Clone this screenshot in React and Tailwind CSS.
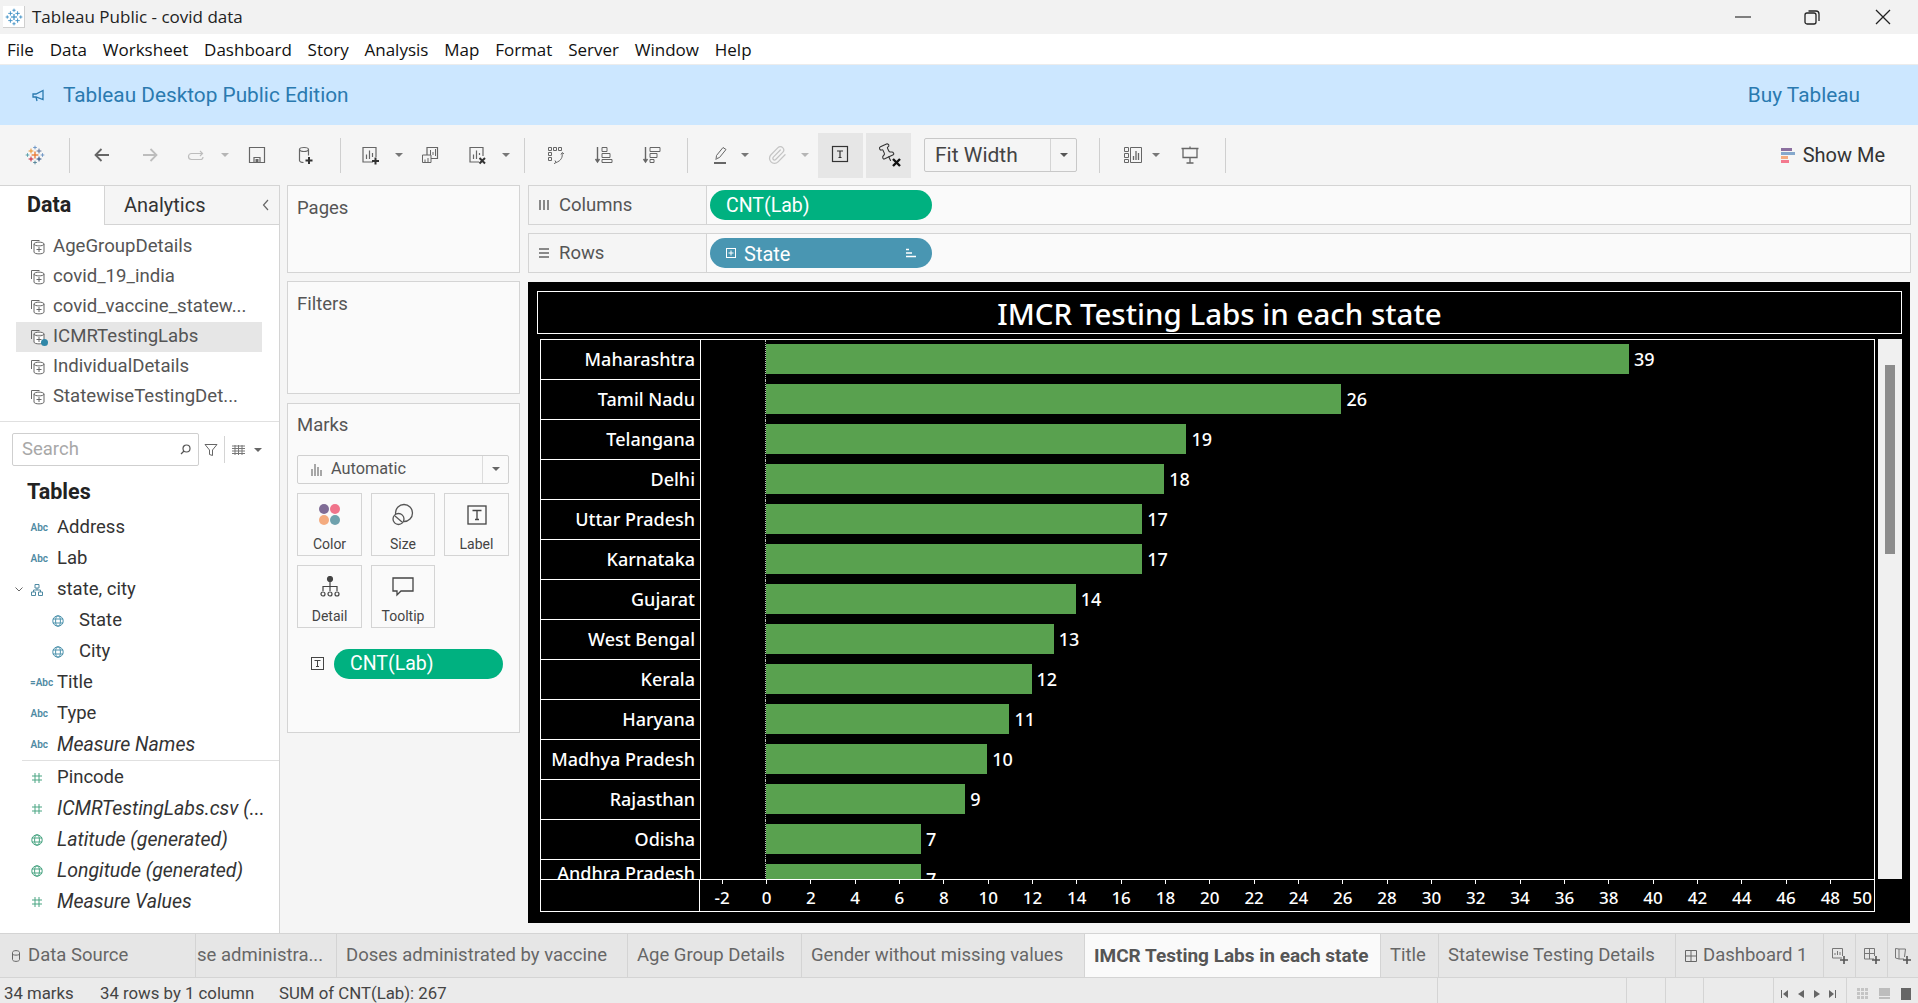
import React from "react";
import { Paperclip, Pin } from "lucide-react";

const ROBOTO = "font-['Roboto','Liberation_Sans',sans-serif]";
const SEGOE = "font-['Open_Sans','Noto_Sans',sans-serif]";

function Plus({ x, y, s = 3, c, w = 1.2 }) {
  return (
    <g stroke={c} strokeWidth={w}>
      <line x1={x - s} y1={y} x2={x + s} y2={y} />
      <line x1={x} y1={y - s} x2={x} y2={y + s} />
    </g>
  );
}

function TableauLogo({ mono, size = 20 }) {
  const c = mono
    ? ["#3d8fc4", "#3d8fc4", "#3d8fc4", "#3d8fc4", "#3d8fc4", "#3d8fc4", "#3d8fc4"]
    : ["#e8762d", "#5b6f94", "#c72037", "#1f447a", "#5fa2ad", "#7399c6", "#59879b"];
  return (
    <svg width={size} height={size} viewBox="0 0 20 20" fill="none">
      <Plus x={10} y={10} s={3.4} c={c[0]} w={1.3} />
      <Plus x={6} y={6} s={2.4} c={mono ? c[1] : "#eb912b"} w={1} />
      <Plus x={14} y={6} s={2.4} c={c[1]} w={1} />
      <Plus x={6} y={14} s={2.4} c={c[2]} w={1} />
      <Plus x={14} y={14} s={2.4} c={c[3]} w={1} />
      <Plus x={10} y={2.5} s={1.8} c={c[5]} w={1} />
      <Plus x={10} y={17.5} s={1.8} c={c[6]} w={1} />
      <Plus x={2.5} y={10} s={1.8} c={c[4]} w={1} />
      <Plus x={17.5} y={10} s={1.8} c={c[5]} w={1} />
    </svg>
  );
}

const Ico = ({ children, className = "", vb = "0 0 20 20" }) => (
  <svg className={"w-5 h-5 shrink-0 " + className} viewBox={vb} fill="none" stroke="#666" strokeWidth="1.2">
    {children}
  </svg>
);

const Caret = ({ ml, color = "#777" }) => (
  <svg className={"w-2 h-1 shrink-0 " + ml} viewBox="0 0 8 4"><path d="M0 0h8L4 4z" fill={color} /></svg>
);

const VDiv = ({ ml }) => <div className={"w-px h-[35px] bg-[#cfcfcf] shrink-0 " + ml} />;

function Toolbar() {
  return (
    <div className="h-[60px] bg-[#f5f5f5] flex items-center shrink-0">
      <div className="ml-[25px] shrink-0"><TableauLogo /></div>
      <VDiv ml="ml-[24px]" />
      <Ico className="ml-[22px]"><path d="M17 10H3.500M9.500 4l-6 6 6 6" strokeWidth="1.800" /></Ico>
      <Ico className="ml-[28px]"><path d="M3 10h13.500M10.500 4l6 6-6 6" stroke="#bdbdbd" strokeWidth="1.800" /></Ico>
      <Ico className="ml-[26px]"><path d="M16 8.500H5.500a2.500 2.500 0 0 0 0 6h9a2.500 2.500 0 0 0 2.500-2.500M14 6l2.500 2.500L14 11" stroke="#bdbdbd" /></Ico>
      <Caret ml="ml-[15px]" color="#b5b5b5" />
      <Ico className="ml-[18px]"><path d="M2.500 2.500h15v15h-15zM7 17.500v-5h6v5" /><rect x="8.500" y="14" width="3" height="3.500" fill="#666" stroke="none" /></Ico>
      <Ico className="ml-[28px]">
        <ellipse cx="9" cy="4.500" rx="4.500" ry="2" />
        <path d="M4.500 4.500v11c0 1 2 2 4 2M13.500 4.500v6" />
        <path d="M14 12v7M10.500 15.500h7" stroke="#333" strokeWidth="2" />
      </Ico>
      <VDiv ml="ml-[25px]" />
      <Ico className="ml-[19px]">
        <path d="M13 17H3V2.500h13V12" />
        <path d="M6.500 14V9.500M9.500 14V5.500M12.500 12V8" />
        <path d="M15.500 12.500v7M12 16h7" stroke="#333" strokeWidth="2" />
      </Ico>
      <Caret ml="ml-[15px]" />
      <Ico className="ml-[17px]">
        <path d="M7 10V2.500h10.500v11H11" />
        <path d="M2.500 10H11v7.500H2.500zM10.500 10V5M13 10V7M15.500 11V4M5 14.500v3M8 13v4" strokeWidth="1" />
      </Ico>
      <Ico className="ml-[27px]">
        <path d="M12 17H3V2.500h13V11" />
        <path d="M6.500 14V9.500M9.500 14V5.500M12.500 10V8" />
        <path d="M12.500 13l5.500 5.500M18 13l-5.500 5.500" stroke="#333" strokeWidth="2" />
      </Ico>
      <Caret ml="ml-[15px]" />
      <VDiv ml="ml-[14px]" />
      <Ico className="ml-[21px]">
        <path d="M2.500 2.500h3v3h-3zM7.500 2.500h3v3h-3zM12.500 2.500h3v3h-3zM2.500 7.500h3v3h-3zM2.500 12.500h3v3h-3z" strokeWidth="1" />
        <path d="M16 8c1 4-1 8-6 9.500M9 15.500l1 2-2 1.200M15 9.500l1.300-2 1.700 1.500" strokeWidth="1" />
      </Ico>
      <Ico className="ml-[28px]">
        <path d="M3.500 2v14M1.500 14l2 3 2-3" strokeWidth="1.400" />
        <path d="M8 2.500h5v4H8zM8 8.500h8v4H8zM8 14.500h10v3H8z" strokeWidth="1" />
      </Ico>
      <Ico className="ml-[28px]">
        <path d="M3.500 2v14M1.500 14l2 3 2-3" strokeWidth="1.400" />
        <path d="M8 2.500h10v4H8zM8 8.500h7v4H8zM8 14.500h4v3H8z" strokeWidth="1" />
      </Ico>
      <VDiv ml="ml-[25px]" />
      <Ico className="ml-[22px]">
        <path d="M7 13.500L6 14.500l.5-4L13 2.500l3 2-6.500 8z" strokeWidth="1" />
        <path d="M4 18h12" strokeWidth="2" />
      </Ico>
      <Caret ml="ml-[11px]" />
      <Paperclip className="ml-[18px] w-5 h-5 shrink-0" color="#c4c4c4" strokeWidth={1.5} />
      <Caret ml="ml-[14px]" color="#b5b5b5" />
      <div className="ml-[9px] w-[45px] h-[45px] bg-[#e6e6e6] flex items-center justify-center shrink-0">
        <svg className="w-5 h-5 shrink-0 -translate-x-px -translate-y-px" viewBox="0 0 20 20" fill="none"><rect x="2.500" y="2.500" width="15" height="15" stroke="#333" strokeWidth="1.200" /><path d="M7 7h6M10 7v6.500M8.500 13.500h3" stroke="#333" strokeWidth="1.200" /></svg>
      </div>
      <div className="ml-[3px] w-[45px] h-[45px] bg-[#e6e6e6] flex items-center justify-center shrink-0">
        <div className="relative w-[24px] h-[24px]">
          <Pin className="w-[20px] h-[20px] -rotate-[25deg]" color="#333" strokeWidth={1.3} />
          <svg className="absolute right-0 bottom-0 w-[9px] h-[9px]" viewBox="0 0 9 9" stroke="#111" strokeWidth="2.400"><path d="M1 1l7 7M8 1L1 8" /></svg>
        </div>
      </div>
      <div className="ml-[13px] w-[153px] h-[34px] border border-[#c8c8c8] rounded-[2px] flex items-center shrink-0">
        <span className={"flex-1 pl-[10px] pt-[1px] text-[21px] text-[#444] " + ROBOTO}>Fit Width</span>
        <div className="w-[26px] h-full border-l border-[#d4d4d4] flex items-center justify-center"><Caret ml="" color="#555" /></div>
      </div>
      <VDiv ml="ml-[22px]" />
      <Ico className="ml-[23px]">
        <path d="M1.500 2.500h4v4h-4zM1.500 8.500h4v4h-4zM1.500 14.500h4v3h-4zM7.500 2.500h11v15h-11z" strokeWidth="1" />
        <path d="M10.500 15v-4M13 15V6M15.500 15V8" strokeWidth="1.300" />
      </Ico>
      <Caret ml="ml-[9px]" />
      <Ico className="ml-[20px]">
        <path d="M1.500 3.500h17M3 3.500h14v9H3zM10 12.500v5M6.500 18h7M10 1.500v2" strokeWidth="1.300" />
      </Ico>
      <VDiv ml="ml-[25px]" />
      <div className="ml-auto pr-[33px] flex items-center gap-[8px]">
        <div className="flex flex-col gap-[1px] w-[14px]">
          <div className="h-[3px] w-[11px] bg-[#8b6f9f]" />
          <div className="h-[3px] w-[14px] bg-[#85a8cc]" />
          <div className="h-[3px] w-[7px] bg-[#f4ab7f]" />
          <div className="h-[3px] w-[8px] bg-[#f3788d]" />
        </div>
        <span className={"text-[20px] text-[#333] " + ROBOTO}>Show Me</span>
      </div>
    </div>
  );
}

function DsIcon({ active }) {
  return (
    <span className="relative w-[16px] h-[16px] shrink-0">
      <svg className="w-[16px] h-[16px]" viewBox="0 0 16 16" fill="none" stroke="#666" strokeWidth="1">
        <path d="M1.500 10V1.500h8" />
        <path d="M4 13V5c0-2.500 10-2.500 10 0v8c0 2.500-10 2.500-10 0zM4 5c0 2.500 10 2.500 10 0" fill="#fff" />
        <path d="M9 8v5M6.500 10.500h5" />
      </svg>
      {active && <span className="absolute right-[-2px] bottom-[-1px] w-[7px] h-[7px] rounded-full bg-[#2f87a8]" />}
    </span>
  );
}

const Abc = ({ calc }) => (
  <span className={"w-[18px] text-right text-[10px] leading-none font-semibold text-[#4e8aa3] shrink-0 whitespace-nowrap " + ROBOTO}>
    {calc ? "=Abc" : "Abc"}
  </span>
);

const Globe = ({ c = "#4e93ad" }) => (
  <svg className="w-[12px] h-[12px] shrink-0" viewBox="0 0 12 12" fill="none" stroke={c} strokeWidth="1">
    <circle cx="6" cy="6" r="5.200" />
    <ellipse cx="6" cy="6" rx="2.400" ry="5.200" />
    <path d="M.8 4h10.400M.8 8h10.400" />
  </svg>
);

const Hash = () => (
  <svg className="w-[12px] h-[12px] shrink-0" viewBox="0 0 12 12" fill="none" stroke="#4aa583" strokeWidth="1">
    <path d="M4 1v10M8 1v10M1 4h10M1 8h10" />
  </svg>
);

const FieldRow = ({ icon, children, italic }) => (
  <div className="h-[31px] flex items-center">
    <div className="w-[57px] pl-[30px] flex">{icon}</div>
    <span className={(italic ? "text-[19.5px] italic " : "text-[18.5px] ") + "text-[#333] whitespace-nowrap " + ROBOTO}>{children}</span>
  </div>
);

const MeasureRow = ({ icon, children, italic }) => (
  <div className="h-[31px] flex items-center pl-[31px]">
    {icon}
    <span className={"ml-[14px] text-[#333] whitespace-nowrap " + (italic ? "text-[19.5px] italic " : "text-[18.5px] ") + ROBOTO}>{children}</span>
  </div>
);

function LeftPane() {
  const sources = ["AgeGroupDetails", "covid_19_india", "covid_vaccine_statew...", "ICMRTestingLabs", "IndividualDetails", "StatewiseTestingDet..."];
  return (
    <div className="w-[280px] shrink-0 bg-white border-r border-[#d4d4d4] border-t flex flex-col">
      <div className="h-[39px] flex shrink-0">
        <div className={"w-[104px] pl-[27px] flex items-center text-[21.500px] font-bold text-[#222] " + ROBOTO}>Data</div>
        <div className={"flex-1 pl-[19px] pr-[9px] flex items-center justify-between bg-[#f5f5f5] border-l border-b border-[#d4d4d4] text-[20px] text-[#333] " + ROBOTO}>
          <span>Analytics</span>
          <svg className="w-[8px] h-[12px]" viewBox="0 0 8 12" fill="none" stroke="#666" strokeWidth="1.200"><path d="M6 1L1.500 6 6 11" /></svg>
        </div>
      </div>
      <div className="pt-[7px] h-[197px] border-b border-[#e0e0e0] shrink-0">
        {sources.map((s, i) => (
          <div key={s} className={"ml-[16px] w-[246px] h-[30px] flex items-center gap-[7px] pl-[14px] " + (i === 3 ? "bg-[#e6e6e6]" : "")}>
            <DsIcon active={i === 3} />
            <span className={"text-[18.600px] text-[#555] whitespace-nowrap " + ROBOTO}>{s}</span>
          </div>
        ))}
      </div>
      <div className="mt-[11px] h-[33px] flex items-center shrink-0">
        <div className="ml-[12px] w-[187px] h-[33px] border border-[#cfcfcf] rounded-[2px] flex items-center justify-between pl-[9px] pr-[7px]">
          <span className={"text-[18.500px] text-[#a8a8a8] " + ROBOTO}>Search</span>
          <svg className="w-[11px] h-[11px]" viewBox="0 0 11 11" fill="none" stroke="#555" strokeWidth="1.200"><circle cx="6.500" cy="4.500" r="3.500" /><path d="M4 7l-3 3" /></svg>
        </div>
        <svg className="ml-[5px] w-[14px] h-[14px]" viewBox="0 0 14 14" fill="none" stroke="#666" strokeWidth="1"><path d="M1 1.500h12L8.500 7v5.500l-3-1V7z" /></svg>
        <div className="ml-[6px] w-px h-[27px] bg-[#d4d4d4]" />
        <svg className="ml-[7px] w-[13px] h-[10px]" viewBox="0 0 13 10" stroke="#777" strokeWidth="1" fill="none"><path d="M0 1h13M0 3.500h13M0 6h13M0 8.500h13M3 0v10M6.500 0v10M10 0v10" /></svg>
        <Caret ml="ml-[9px]" color="#666" />
      </div>
      <div className={"mt-[14px] pl-[27px] text-[21.500px] leading-[24px] font-bold text-[#222] shrink-0 " + ROBOTO}>Tables</div>
      <div className="mt-[8px] flex flex-col">
        <FieldRow icon={<Abc />}>Address</FieldRow>
        <FieldRow icon={<Abc />}>Lab</FieldRow>
        <div className="h-[31px] flex items-center">
          <svg className="ml-[15px] w-[8px] h-[5px]" viewBox="0 0 8 5" fill="none" stroke="#666" strokeWidth="1"><path d="M.5.5L4 4 7.500.5" /></svg>
          <svg className="ml-[8px] w-[12px] h-[12px]" viewBox="0 0 12 12" fill="none" stroke="#4e8aa3" strokeWidth="1"><path d="M4 .5h4v3.500H4zM.5 8h4v3.500h-4zM7.500 8h4v3.500h-4zM6 4v2M2.500 8V6h7v2" /></svg>
          <span className={"ml-[14px] text-[18.500px] text-[#333] " + ROBOTO}>state, city</span>
        </div>
        <div className="h-[31px] flex items-center pl-[52px]"><Globe /><span className={"ml-[15px] text-[18.500px] text-[#333] " + ROBOTO}>State</span></div>
        <div className="h-[31px] flex items-center pl-[52px]"><Globe /><span className={"ml-[15px] text-[18.500px] text-[#333] " + ROBOTO}>City</span></div>
        <FieldRow icon={<Abc calc />}>Title</FieldRow>
        <FieldRow icon={<Abc />}>Type</FieldRow>
        <FieldRow icon={<Abc />} italic>Measure Names</FieldRow>
        <div className="ml-[22px] h-px bg-[#e0e0e0] mb-[1px]" />
        <MeasureRow icon={<Hash />}>Pincode</MeasureRow>
        <MeasureRow icon={<Hash />} italic>ICMRTestingLabs.csv (...</MeasureRow>
        <MeasureRow icon={<Globe c="#4aa583" />} italic>Latitude (generated)</MeasureRow>
        <MeasureRow icon={<Globe c="#4aa583" />} italic>Longitude (generated)</MeasureRow>
        <MeasureRow icon={<Hash />} italic>Measure Values</MeasureRow>
      </div>
    </div>
  );
}

const MarkBtn = ({ label, children }) => (
  <div className="h-[63px] border border-[#d4d4d4] flex flex-col items-center justify-start pt-[8px]">
    <div className="h-[26px] flex items-center">{children}</div>
    <span className={"mt-[7px] text-[14px] leading-[18px] text-[#444] " + ROBOTO}>{label}</span>
  </div>
);

function MiddleCol() {
  const panel = "border border-[#d4d4d4] bg-[#fafafa] px-[9px]";
  const heading = "text-[18.500px] text-[#555] " + ROBOTO;
  return (
    <div className="ml-[7px] w-[233px] shrink-0 flex flex-col">
      <div className={panel + " h-[88px] pt-[9px]"}><div className={heading}>Pages</div></div>
      <div className={panel + " mt-[8px] h-[113px] pt-[9px]"}><div className={heading}>Filters</div></div>
      <div className={panel + " mt-[9px] h-[330px] pt-[8px]"}>
        <div className={heading}>Marks</div>
        <div className="mt-[15px] h-[29px] w-[212px] border border-[#d0d0d0] rounded-[2px] flex items-center">
          <div className="flex-1 pl-[13px] flex items-center gap-[9px]">
            <svg className="w-[11px] h-[13px]" viewBox="0 0 11 13" stroke="#555" strokeWidth="1"><path d="M1 13V6M4 13V1M7 13V4M10 13V7" /></svg>
            <span className={"text-[16.300px] text-[#555] " + ROBOTO}>Automatic</span>
          </div>
          <div className="w-[26px] h-full border-l border-[#dcdcdc] flex items-center justify-center"><Caret ml="" color="#666" /></div>
        </div>
        <div className="mt-[9px] grid grid-cols-[65px_64px_65px] gap-x-[9px] gap-y-[9px] w-[212px]">
          <MarkBtn label="Color">
            <div className="grid grid-cols-2 gap-[1px]">
              <span className="w-[10px] h-[10px] rounded-full bg-[#7f6c96]" />
              <span className="w-[10px] h-[10px] rounded-full bg-[#f0748b]" />
              <span className="w-[10px] h-[10px] rounded-full bg-[#f4ab7f]" />
              <span className="w-[10px] h-[10px] rounded-full bg-[#6fa1ad]" />
            </div>
          </MarkBtn>
          <MarkBtn label="Size">
            <svg className="w-[24px] h-[24px]" viewBox="0 0 24 24" fill="none" stroke="#555" strokeWidth="1.300">
              <circle cx="13" cy="10" r="8.500" />
              <circle cx="7.500" cy="16" r="5.500" fill="#fafafa" />
              <path d="M4 13l7 6" />
            </svg>
          </MarkBtn>
          <MarkBtn label="Label">
            <svg className="w-[20px] h-[20px]" viewBox="0 0 20 20" fill="none" stroke="#444" strokeWidth="1.300">
              <rect x="1" y="1" width="18" height="18" />
              <path d="M5.500 5.500h9M10 5.500v9M8 14.500h4" />
            </svg>
          </MarkBtn>
          <MarkBtn label="Detail">
            <svg className="w-[20px] h-[22px]" viewBox="0 0 20 22" fill="none" stroke="#444" strokeWidth="1.200">
              <circle cx="10" cy="3" r="2.500" fill="#444" />
              <path d="M10 5v10M3 15v-4.500h14V15" />
              <circle cx="3" cy="18" r="2" />
              <circle cx="10" cy="18" r="2" />
              <circle cx="17" cy="18" r="2" />
            </svg>
          </MarkBtn>
          <MarkBtn label="Tooltip">
            <svg className="w-[22px] h-[20px]" viewBox="0 0 22 20" fill="none" stroke="#444" strokeWidth="1.300"><path d="M1 1h20v13H9l-4 4v-4H1z" /></svg>
          </MarkBtn>
        </div>
        <div className="mt-[21px] flex items-center">
          <svg className="ml-[14px] w-[13px] h-[13px]" viewBox="0 0 13 13" fill="none" stroke="#444" strokeWidth="1"><rect x=".5" y=".5" width="12" height="12" /><path d="M3.500 3.500h6M6.500 3.500v6M5 9.500h3" /></svg>
          <div className={"ml-[10px] w-[169px] h-[30px] rounded-full bg-[#00b180] text-white text-[19.500px] pl-[16px] flex items-center " + ROBOTO}>CNT(Lab)</div>
        </div>
      </div>
    </div>
  );
}

const DATA = [
  ["Maharashtra", 39], ["Tamil Nadu", 26], ["Telangana", 19], ["Delhi", 18], ["Uttar Pradesh", 17],
  ["Karnataka", 17], ["Gujarat", 14], ["West Bengal", 13], ["Kerala", 12], ["Haryana", 11],
  ["Madhya Pradesh", 10], ["Rajasthan", 9], ["Odisha", 7], ["Andhra Pradesh", 7],
];
const UNIT = 22.13;
const chartFont = "font-['Noto_Sans','Open_Sans',sans-serif]";

function Chart() {
  const ticks = [];
  for (let v = -2; v <= 48; v += 2) ticks.push(v);
  return (
    <div className="flex-1 min-h-0 mt-[9px] mb-[10px] mr-[8px] bg-black flex flex-col pl-[9px] pr-[8px] pt-[9px]">
      <div className={"h-[43px] pt-[3px] border border-white flex items-center justify-center text-white text-[29.500px] font-medium " + chartFont}>
        IMCR Testing Labs in each state
      </div>
      <div className="mt-[5px] flex">
        <div className="ml-[3px] w-[1335px] h-[573px] border border-white flex flex-col">
          <div className="h-[539px] overflow-hidden flex flex-col shrink-0">
            {DATA.map(([name, v], i) => (
              <div key={name} className="h-[40px] shrink-0 flex">
                <div className={"w-[160px] shrink-0 h-full border-b border-r border-white flex justify-end pr-[5px] text-white text-[18px] font-medium " + (i === 13 ? "items-start " : "items-center ") + chartFont}>
                  {name}
                </div>
                <div className="ml-[64px] border-l border-dotted border-[#bbbbbb] h-full">
                  <div className="mt-[4px] h-[30px] flex items-center">
                    <div className="h-full bg-[#59a14f] shrink-0" style={{ width: v * UNIT }} />
                    <span className={"ml-[5px] text-white text-[18px] font-medium " + chartFont}>{v}</span>
                  </div>
                </div>
              </div>
            ))}
          </div>
          <div className="flex-1 flex">
            <div className="w-[159px] shrink-0 border-t border-r border-white" />
            <div className="flex-1 flex border-t border-white">
              {ticks.map((t) => (
                <div key={t} className="w-[44.340px] shrink-0 flex flex-col items-center">
                  <div className="w-px h-[4px] bg-white" />
                  <span className={"mt-[3px] text-white text-[17px] leading-[22px] font-medium " + chartFont}>{t}</span>
                </div>
              ))}
              <span className={"flex-1 text-right pr-[2px] mt-[7px] text-white text-[17px] leading-[22px] font-medium " + chartFont}>50</span>
            </div>
          </div>
        </div>
        <div className="ml-[3px] w-[25px] h-[540px] bg-[#f0f0f0] flex justify-center pt-[26px]">
          <div className="w-[10px] h-[189px] bg-[#8c8c8c]" />
        </div>
      </div>
    </div>
  );
}

function Shelf({ icon, label, children, mt }) {
  return (
    <div className={"h-[40px] mr-[7px] border border-[#d4d4d4] bg-[#fafafa] flex shrink-0 " + mt}>
      <div className="w-[178px] shrink-0 border-r border-[#d4d4d4] bg-[#f5f5f5] flex items-center pl-[9px] gap-[9px]">
        {icon}
        <span className={"pt-[2px] text-[18.500px] text-[#555] " + ROBOTO}>{label}</span>
      </div>
      {children}
    </div>
  );
}

function RightCol() {
  return (
    <div className="ml-[8px] flex-1 min-w-0 flex flex-col">
      <Shelf
        label="Columns"
        icon={<svg className="w-[12px] h-[12px]" viewBox="0 0 12 12" stroke="#666" strokeWidth="1.500"><path d="M2 1v10M6 1v10M10 1v10" /></svg>}
      >
        <div className={"ml-[3px] mt-[4px] w-[222px] h-[30px] pt-[1px] rounded-full bg-[#00b180] text-white text-[19.500px] pl-[16px] flex items-center " + ROBOTO}>CNT(Lab)</div>
      </Shelf>
      <Shelf
        mt="mt-[8px]"
        label="Rows"
        icon={<svg className="w-[12px] h-[12px]" viewBox="0 0 12 12" stroke="#666" strokeWidth="1.500"><path d="M1 2h10M1 6h10M1 10h10" /></svg>}
      >
        <div className={"ml-[3px] mt-[4px] w-[222px] h-[30px] rounded-full bg-[#4996b2] text-white text-[20px] pl-[16px] pr-[16px] flex items-center " + ROBOTO}>
          <svg className="w-[10px] h-[10px] mr-[8px]" viewBox="0 0 10 10" fill="none" stroke="#fff" strokeWidth="1"><rect x=".5" y=".5" width="9" height="9" /><path d="M2.500 5h5M5 2.500v5" /></svg>
          <span className="flex-1 pt-[1px]">State</span>
          <svg className="w-[10px] h-[10px]" viewBox="0 0 10 10" stroke="#fff" strokeWidth="1.500"><path d="M0 1.500h3M0 5h6M0 8.500h10" /></svg>
        </div>
      </Shelf>
      <Chart />
    </div>
  );
}

function Tab({ w, children, active }) {
  return (
    <div className={"h-full shrink-0 flex items-center pl-[9px] pt-[1px] whitespace-nowrap border-r border-[#d4d4d4] " + w + " " + (active ? "bg-[#fafafa] font-bold text-[#555] text-[19px]" : "text-[#666] text-[18.500px]")}>
      {children}
    </div>
  );
}

function AddIcon({ children }) {
  return (
    <div className="w-[32px] h-full border-r border-[#d4d4d4] flex items-center justify-center shrink-0">
      <svg className="w-[18px] h-[18px]" viewBox="0 0 18 18" fill="none" stroke="#777" strokeWidth="1">
        {children}
        <path d="M13 9v8M9 13h8" stroke="#555" strokeWidth="1.600" />
      </svg>
    </div>
  );
}

function TabBar() {
  return (
    <div className={"h-[45px] border-t border-b border-[#d4d4d4] bg-[#e6e6e6] flex shrink-0 " + ROBOTO}>
      <div className="w-[196px] h-full shrink-0 border-r border-[#d4d4d4] flex items-center pl-[12px] pt-[1px] gap-[8px] text-[18.500px] text-[#666]">
        <svg className="w-[8px] h-[12px]" viewBox="0 0 8 12" fill="none" stroke="#666" strokeWidth="1"><path d="M.5 2.500c0-2.500 7-2.500 7 0v7c0 2.500-7 2.500-7 0zM.5 4c0 1.500 7 1.500 7 0" /></svg>
        Data Source
      </div>
      <div className="w-[141px] h-full shrink-0 border-r border-[#d4d4d4] flex items-center pl-px pt-[1px] whitespace-nowrap text-[18.500px] text-[#666]">se administra...</div>
      <Tab w="w-[291px]">Doses administrated by vaccine</Tab>
      <Tab w="w-[174px]">Age Group Details</Tab>
      <Tab w="w-[283px]">Gender without missing values</Tab>
      <Tab w="w-[296px]" active>IMCR Testing Labs in each state</Tab>
      <Tab w="w-[58px]">Title</Tab>
      <Tab w="w-[237px]">Statewise Testing Details</Tab>
      <Tab w="w-[148px]">
        <svg className="w-[12px] h-[12px] mr-[6px]" viewBox="0 0 12 12" fill="none" stroke="#666" strokeWidth="1"><path d="M.5.5h11v11H.5zM6 .5v11M.5 6h11" /></svg>
        Dashboard 1
      </Tab>
      <AddIcon><path d="M11 11H1.500V1.500h10V9M4 8V6M6.500 8V4M9 8V5" /></AddIcon>
      <AddIcon><path d="M11 12H1.500V1.500h10V9M6.500 1.500V12M1.500 6.500h10" /></AddIcon>
      <div className="flex-1 flex items-center justify-center">
        <svg className="w-[18px] h-[18px]" viewBox="0 0 18 18" fill="none" stroke="#777" strokeWidth="1">
          <path d="M10 12H5V2L1.500 1.500V11l3.500 1M5 2h6.500l-1 8" />
          <path d="M13 9v8M9 13h8" stroke="#555" strokeWidth="1.600" />
        </svg>
      </div>
    </div>
  );
}

function StatusBar() {
  const sep = "h-full border-l border-[#d4d4d4] shrink-0";
  return (
    <div className={"flex-1 bg-[#ebebeb] flex items-stretch text-[16.800px] text-[#444] " + ROBOTO}>
      <span className="ml-[4px] w-[96px] pt-[3px] whitespace-nowrap">34 marks</span>
      <span className="w-[179px] pt-[3px] whitespace-nowrap">34 rows by 1 column</span>
      <span className="w-[200px] pt-[3px] whitespace-nowrap">SUM of CNT(Lab): 267</span>
      <div className="flex-1" />
      <div className={sep + " w-[189px]"} />
      <div className={sep + " w-[39px]"} />
      <div className={sep + " w-[38px]"} />
      <div className={sep + " w-[70px]"} />
      <div className={sep + " w-[73px] flex items-center gap-[9px] pl-[7px] pt-[3px]"}>
        <svg className="w-[7px] h-[8px]" viewBox="0 0 7 8" fill="#666"><path d="M0 0h1v8H0zM7 0v8L2 4z" /></svg>
        <svg className="w-[6px] h-[8px] ml-[1px]" viewBox="0 0 6 8" fill="#666"><path d="M6 0v8L0 4z" /></svg>
        <svg className="w-[6px] h-[8px] ml-[1px]" viewBox="0 0 6 8" fill="#666"><path d="M0 0v8l6-4z" /></svg>
        <svg className="w-[7px] h-[8px]" viewBox="0 0 7 8" fill="#666"><path d="M0 0v8l5-4zM6 0h1v8H6z" /></svg>
      </div>
      <div className={sep + " w-[72px] flex items-center gap-[11px] pl-[10px] pt-[3px]"}>
        <div className="grid grid-cols-3 gap-[1px]">
          {Array.from({ length: 9 }).map((_, i) => <span key={i} className="w-[3px] h-[3px] bg-[#c4c4c4]" />)}
        </div>
        <div className="w-[11px] flex flex-col gap-[1px]">
          <span className="h-[8px] bg-[#bdbdbd]" />
          <span className="h-[2px] bg-[#bdbdbd]" />
        </div>
        <div className="w-[10px] h-[12px] bg-[#666]" />
      </div>
    </div>
  );
}

export default function App() {
  return (
    <div className="w-[1918px] h-[1003px] overflow-hidden bg-[#f5f5f5] flex flex-col">
      <div className="h-[34px] bg-[#f2f2f2] flex items-center shrink-0">
        <div className="ml-[3px] w-[22px] h-[22px] bg-white border-b border-r border-[#cfcfcf] flex items-center justify-center">
          <TableauLogo mono size={18} />
        </div>
        <span className={"ml-[7px] text-[17px] text-[#222] " + SEGOE}>Tableau Public - covid data</span>
        <div className="ml-auto flex items-center">
          <svg className="w-[16px] h-[16px]" viewBox="0 0 16 16" stroke="#222" strokeWidth="1.100"><path d="M0 8h16" /></svg>
          <svg className="ml-[53px] w-[16px] h-[16px]" viewBox="0 0 16 16" fill="none" stroke="#222" strokeWidth="1.300"><rect x="1" y="4" width="11" height="11" rx="2" /><path d="M4.500 2H12a3 3 0 0 1 3 3v7" /></svg>
          <svg className="ml-[55px] mr-[27px] w-[16px] h-[16px]" viewBox="0 0 16 16" stroke="#222" strokeWidth="1.300"><path d="M1 1l14 14M15 1L1 15" /></svg>
        </div>
      </div>
      <div className={"h-[31px] pt-[1px] bg-white border-b border-[#ececec] flex items-center gap-[15.800px] pl-[7px] text-[17px] text-[#111] shrink-0 " + SEGOE}>
        {["File", "Data", "Worksheet", "Dashboard", "Story", "Analysis", "Map", "Format", "Server", "Window", "Help"].map((m) => <span key={m}>{m}</span>)}
      </div>
      <div className={"h-[60px] pt-[1px] bg-[#cce7ff] flex items-center justify-between pl-[32px] pr-[58px] text-[20.800px] text-[#2a7ab0] shrink-0 " + ROBOTO}>
        <span className="flex items-center gap-[18px]">
          <svg className="w-[13px] h-[13px]" viewBox="0 0 13 13" fill="none" stroke="#2a7ab0" strokeWidth="1.300"><path d="M1 5h3l7-3.500v9L4 8H1zM4 8l1 4" /></svg>
          Tableau Desktop Public Edition
        </span>
        <span>Buy Tableau</span>
      </div>
      <Toolbar />
      <div className="h-[748px] flex shrink-0">
        <LeftPane />
        <MiddleCol />
        <RightCol />
      </div>
      <TabBar />
      <StatusBar />
    </div>
  );
}
